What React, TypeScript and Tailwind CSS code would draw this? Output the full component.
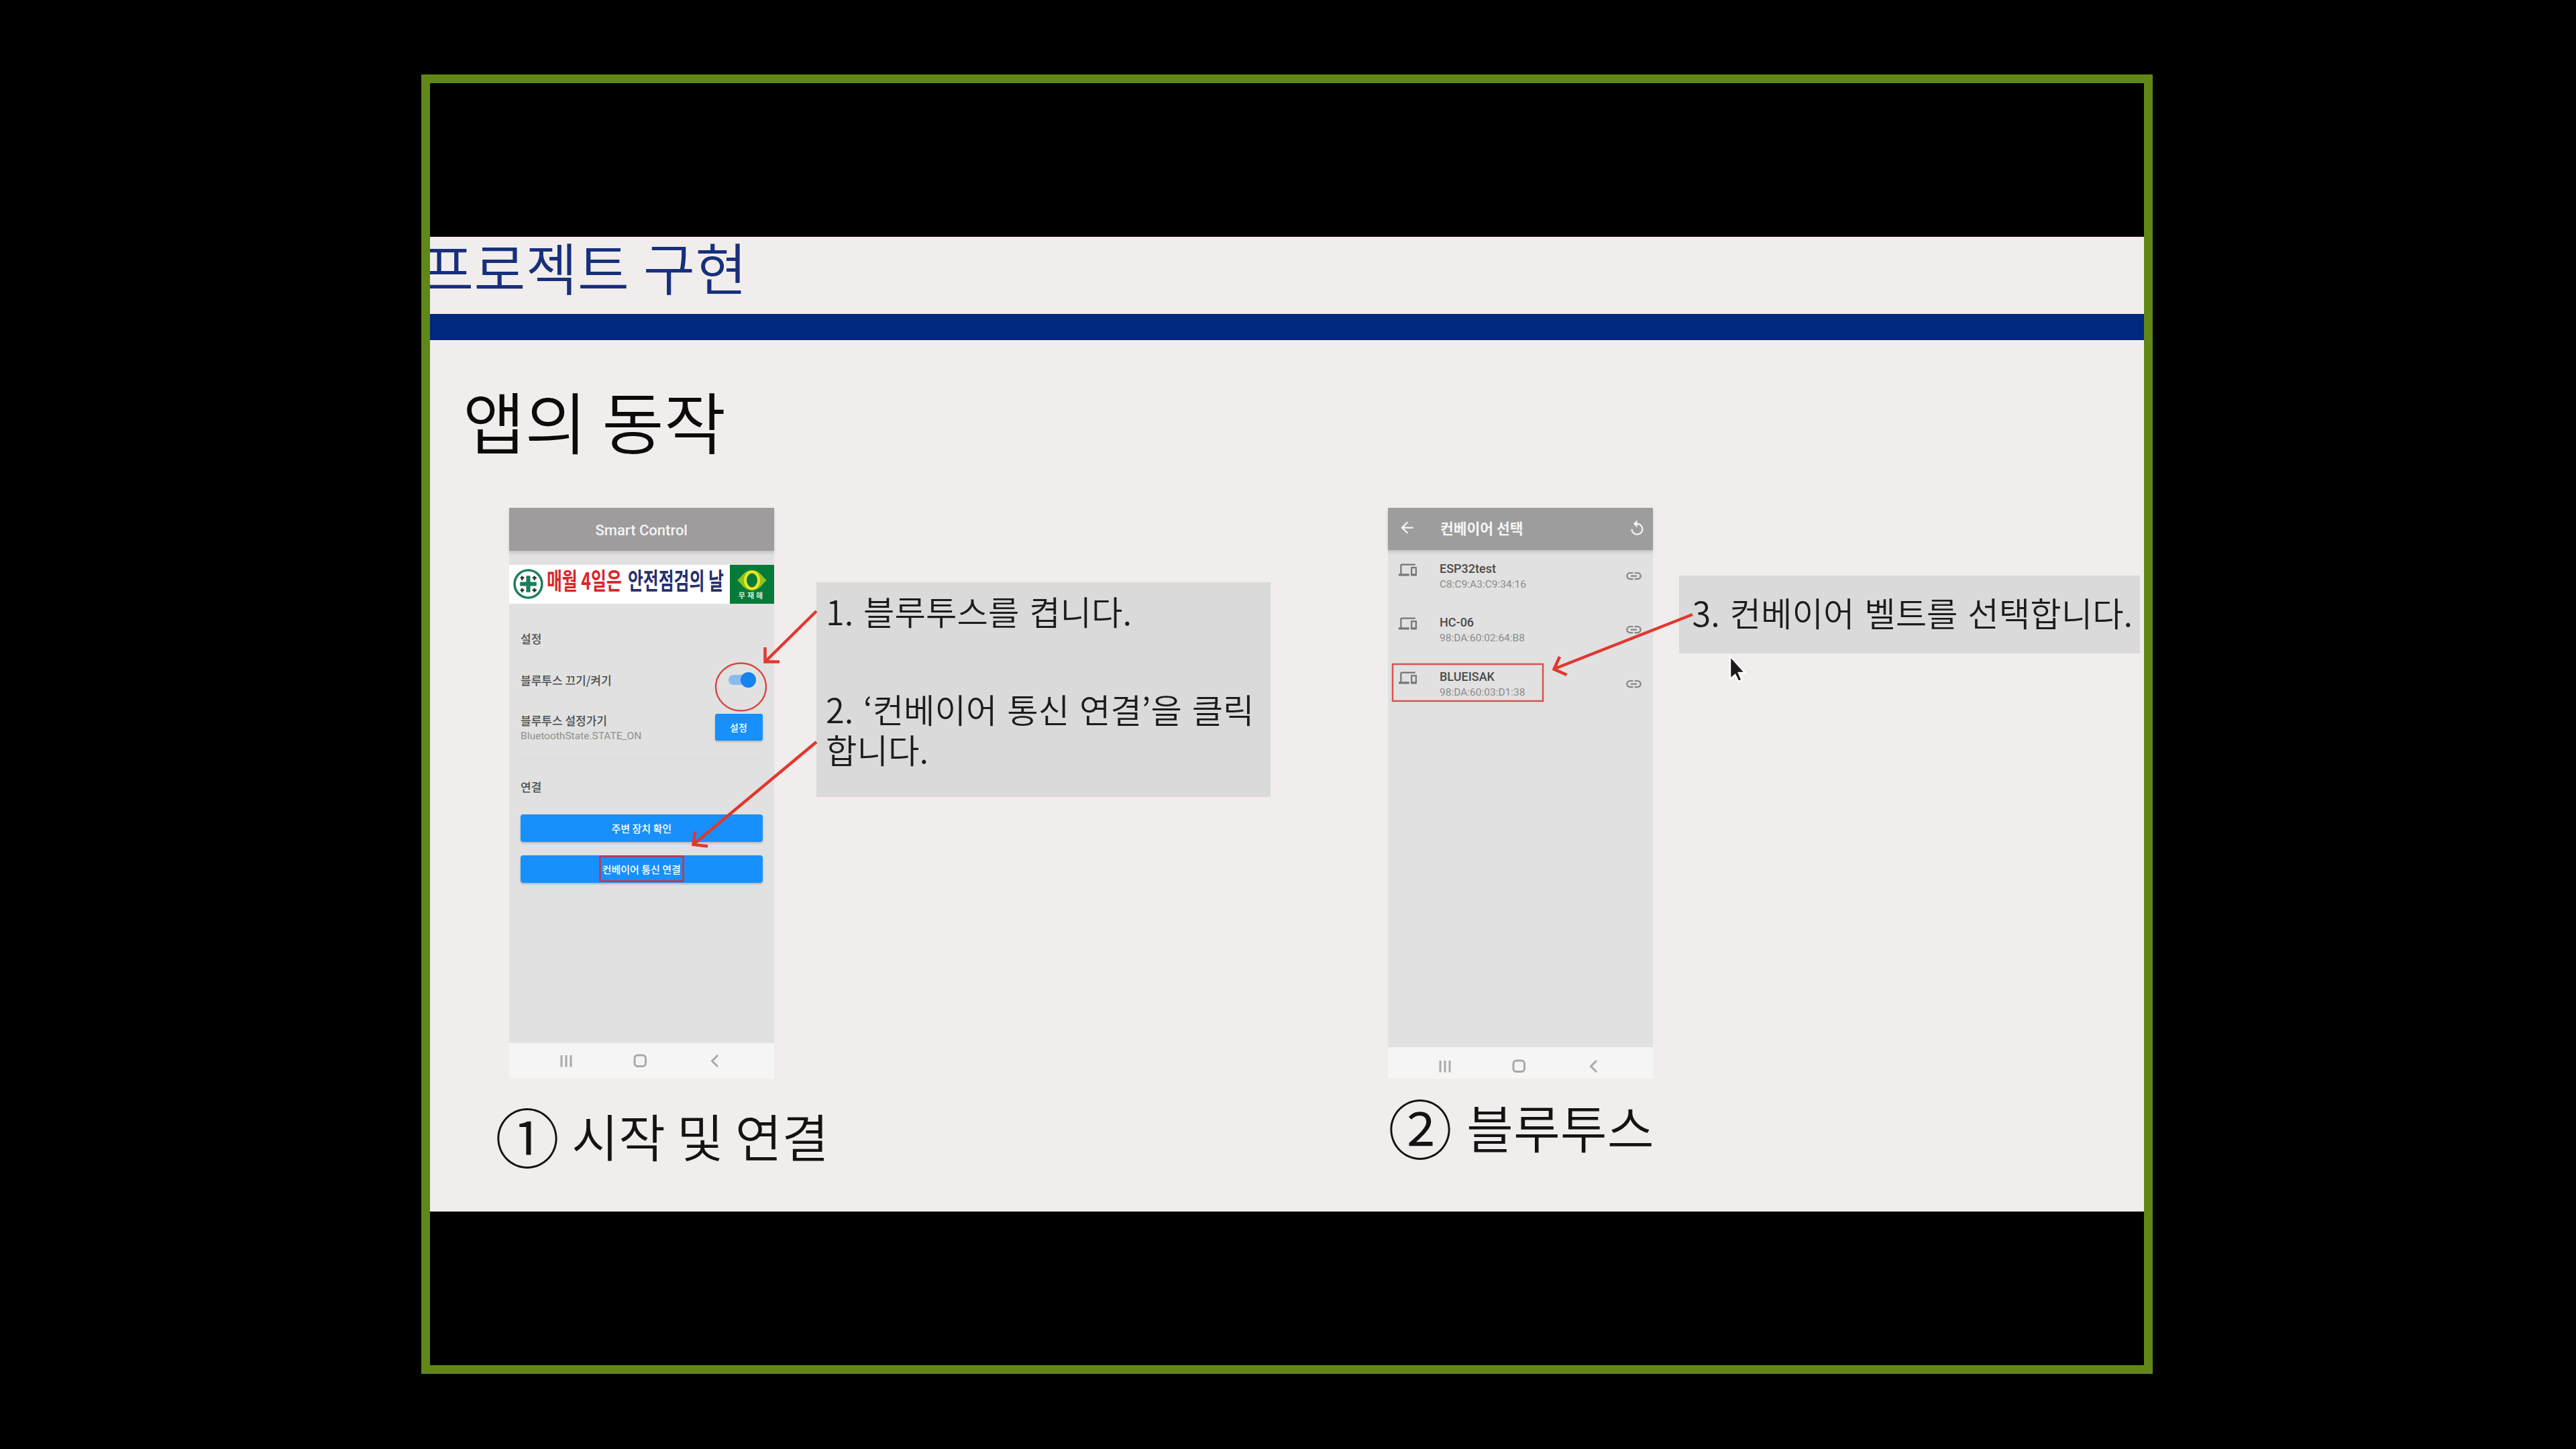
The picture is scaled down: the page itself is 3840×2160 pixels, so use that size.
import { MdArrowBack, MdDevices, MdLink, MdReplay } from "react-icons/md";

const KR = "font-['Noto_Sans_CJK_KR',sans-serif]";
const RB = "font-['Roboto','Noto_Sans_CJK_KR',sans-serif]";

const devices = [
  { name: "ESP32test", mac: "C8:C9:A3:C9:34:16" },
  { name: "HC-06", mac: "98:DA:60:02:64:B8" },
  { name: "BLUEISAK", mac: "98:DA:60:03:D1:38" },
];

/* Android system navigation: recents, home, back */
function NavBar({ className }: { className: string }) {
  return (
    <div className={"flex w-full bg-[#f5f5f5] " + className}>
      <svg viewBox="0 0 394 52" className="h-[52px] w-[394px] shrink-0" fill="none" stroke="#a9a9a9" strokeWidth="3">
        <path d="M78 18v17.500M85 18v17.500M92 18v17.500" />
        <rect x="187" y="18" width="16.500" height="16.500" rx="4.500" />
        <path d="M311 18l-8.500 8.500 8.500 8.500" />
      </svg>
    </div>
  );
}

/* Green cross inside a ring */
function SafetyMark() {
  return (
    <svg viewBox="0 0 44 44" className="h-[45px] w-[45px] shrink-0">
      <circle cx="22" cy="22" r="20" fill="#fff" stroke="#1f7f5c" strokeWidth="3.500" />
      <path d="M19 10h6v9h9v6h-9v9h-6v-9h-9v-6h9z" fill="#17805a" />
      <g stroke="#2c3a36" strokeWidth="2.500">
        <path d="M10.500 13h5.500M13 10.500v6M28 13h6M31 10.500v6M10.500 31h5.500M13 28v6M28 31h6M31 28v6" />
      </g>
    </svg>
  );
}

function SafetyBanner() {
  return (
    <div className={"mt-[21px] flex h-[58px] w-full bg-white " + KR}>
      <div className="ml-[6px] mt-[6px]">
        <SafetyMark />
      </div>
      <div className="ml-[5px] mt-[4px] h-[40px] w-[270px] shrink-0">
        <div className="origin-top-left scale-x-[0.71] whitespace-nowrap text-[35px] font-bold leading-none">
          <span className="text-[#d8262b]">매월 4일은</span>
          <span className="ml-[13px] text-[#26306f]">안전점검의 날</span>
        </div>
      </div>
      <div className="ml-auto flex w-[66px] shrink-0 flex-col items-center bg-[#067a38]">
        <svg viewBox="0 0 44 30" className="mt-[8px] h-[30px] w-[44px]">
          <path d="M0 15C7 10 10 0 22 0s15 10 22 15C37 20 34 30 22 30S7 20 0 15z" fill="#8fc31f" />
          <ellipse cx="22" cy="15" rx="10" ry="12.500" fill="#067a38" stroke="#ece622" strokeWidth="4" />
        </svg>
        <div className="mt-[2px] text-[11px] font-bold leading-none tracking-[3px] text-[#d5ecd9]">무재해</div>
      </div>
    </div>
  );
}

function ControlPhone() {
  return (
    <div className={"ml-[21px] flex h-[851px] w-[394.500px] flex-col bg-[#e1e1e1] " + KR}>
      <div className={"flex h-[64px] justify-center bg-[#9e9c9c] pt-[23px] text-[22px] font-medium leading-none text-[#f4f4f4] shadow-[0_3px_4px_rgba(0,0,0,0.14)] " + RB}>
        Smart Control
      </div>
      <SafetyBanner />
      <div className="flex flex-col px-[17px] text-[17px] font-medium leading-none text-[#4c4c4c]">
        <div className="mt-[43px]">설정</div>
        <div className="mt-[33px] flex h-[40px] items-center justify-between">
          <span>블루투스 끄기/켜기</span>
          <div className="relative mr-[10px] flex h-[24px] w-[41px] items-center">
            <div className="h-[15px] w-[34px] rounded-full bg-[#88bcef]" />
            <div className="absolute right-0 h-[23px] w-[23px] rounded-full bg-[#1683ee]" />
          </div>
        </div>
        <div className="mt-[31px] flex justify-between">
          <div>
            <div className="mt-[1px]">블루투스 설정가기</div>
            <div className={"mt-[8px] text-[15.500px] font-normal text-[#8f8f8f] " + RB}>BluetoothState.STATE_ON</div>
          </div>
          <div className="flex h-[40px] w-[71px] items-center justify-center rounded-[3px] bg-[#1890fb] text-[14px] text-white shadow-[0_2px_3px_rgba(0,0,0,0.2)]">
            설정
          </div>
        </div>
        <div className="mt-[25px] h-px w-full bg-[#dcdcdc]" />
        <div className="mt-[32px]">연결</div>
        <div className="mt-[33px] flex h-[41px] items-center justify-center rounded-[4px] bg-[#1890fb] text-[15px] text-white shadow-[0_2px_3px_rgba(0,0,0,0.2)]">
          주변 장치 확인
        </div>
        <div className="mt-[20px] flex h-[41px] items-center justify-center rounded-[4px] bg-[#1890fb] text-[15px] text-white shadow-[0_2px_3px_rgba(0,0,0,0.2)]">
          <span className="flex h-[40px] w-[127px] items-center justify-center whitespace-nowrap border-[3px] border-[#b23f60]">
            컨베이어 통신 연결
          </span>
        </div>
      </div>
      <NavBar className="mt-auto h-[53px]" />
    </div>
  );
}

function DevicePhone() {
  return (
    <div className={"flex h-[851px] w-[394.500px] flex-col bg-[#e1e1e1] " + RB}>
      <div className="flex h-[63px] bg-[#9e9d9d] text-[#f6f6f6] shadow-[0_3px_4px_rgba(0,0,0,0.14)]">
        <MdArrowBack className="ml-[15px] mt-[16px] h-[27px] w-[27px]" />
        <div className={"ml-[36px] mt-[19px] text-[21.500px] font-bold leading-none " + KR}>컨베이어 선택</div>
        <MdReplay className="ml-auto mr-[10px] mt-[17px] h-[27px] w-[27px]" />
      </div>
      {devices.map((d) => (
        <div key={d.name} className="flex h-[80.300px] shrink-0">
          <MdDevices className="ml-[16px] mt-[16px] h-[27px] w-[27px] text-[#767676]" />
          <div className="ml-[34px] mt-[19px] leading-none">
            <div className="text-[18px] font-medium text-[#4a4a4a]">{d.name}</div>
            <div className="mt-[7px] text-[15.500px] text-[#8b8b8b]">{d.mac}</div>
          </div>
          <MdLink className="ml-auto mr-[15px] mt-[25px] h-[27px] w-[27px] text-[#858585]" />
        </div>
      ))}
      <NavBar className="mt-auto h-[47.500px] pt-[2px]" />
    </div>
  );
}

/* Arrows, highlight outlines and the mouse pointer drawn over the slide */
function Annotations() {
  return (
    <svg viewBox="641 353 2555 1453" className="pointer-events-none absolute inset-0 h-[1453px] w-[2555px]" fill="none">
      <g stroke="#e2372e" strokeWidth="4.500">
        <path d="M1217 911L1141 986M1140.500 965v21.500h21.500" />
        <path d="M1217 1106L1034 1258.500M1036 1239.500L1033.500 1259l21.500 2.500" />
        <path d="M2523 916L2317 997M2325 979l-8.500 18.500 19 8.500" />
      </g>
      <ellipse cx="1104.500" cy="1024" rx="37.500" ry="35.500" stroke="#d64a42" strokeWidth="2.500" />
      <rect x="2076" y="990" width="224" height="55" stroke="#d9524f" strokeWidth="2.500" />
      <path
        d="M2579 978v34.500l7.500-6.500 5 10 5-2.500-4.500-10.500h9.500z"
        fill="#1c1a1c"
        stroke="#fff"
        strokeWidth="2.500"
      />
    </svg>
  );
}

export default function App() {
  return (
    <div className={"h-[2160px] w-[3840px] overflow-hidden bg-black pl-[628px] pt-[111px] " + KR}>
      <div className="h-[1937px] w-[2581px] border-[13px] border-[#618719] pt-[229px]">
        <div className="relative h-[1453px] w-full overflow-hidden bg-[#f0edec]">
          <div className="h-[115px] whitespace-nowrap pt-[2px]">
            <div className="-ml-[12px] text-[84px] font-[350] leading-none text-[#17307c] [word-spacing:2px]">
              프로젝트 구현
            </div>
          </div>
          <div className="h-[39px] bg-[#00287d]" />
          <div className="ml-[49px] mt-[68px] h-[102px] whitespace-nowrap text-[100.500px] font-[350] leading-none text-[#0c0a0a]">
            앱의 동작
          </div>
          <div className="mt-[80px] flex items-start pl-[97px]">
            <div className="w-[416px] shrink-0">
              <ControlPhone />
              <div className="mt-[36px] flex h-[96px] items-center whitespace-nowrap font-[350] leading-none text-[#141212]">
                <span className="text-[96px]">①</span>
                <span className="ml-[18px] text-[76px]">시작 및 연결</span>
              </div>
            </div>
            <div className="ml-[63px] mt-[111px] h-[320px] w-[677px] shrink-0 whitespace-nowrap bg-[#dadada] pl-[14px] pt-[12px] text-[50.500px] font-[350] leading-[60.500px] text-[#1c1c1c] [word-spacing:3.5px]">
              <p>1. 블루투스를 켭니다.</p>
              <p className="mt-[85px]">2. ‘컨베이어 통신 연결’을 클릭</p>
              <p>합니다.</p>
            </div>
            <div className="ml-[175px] w-[394.500px] shrink-0">
              <DevicePhone />
              <div className="mt-[23px] flex h-[96px] items-center whitespace-nowrap font-[350] leading-none text-[#141212]">
                <span className="text-[96px]">②</span>
                <span className="ml-[21px] text-[76px]">블루투스</span>
              </div>
            </div>
            <div className="ml-[39px] mt-[101px] h-[116px] w-[687px] shrink-0 whitespace-nowrap bg-[#dadada] pl-[20px] pt-[24px] text-[50.500px] font-[350] leading-[60.500px] text-[#1c1c1c] [word-spacing:3.5px]">
              3. 컨베이어 벨트를 선택합니다.
            </div>
          </div>
          <Annotations />
        </div>
      </div>
    </div>
  );
}
